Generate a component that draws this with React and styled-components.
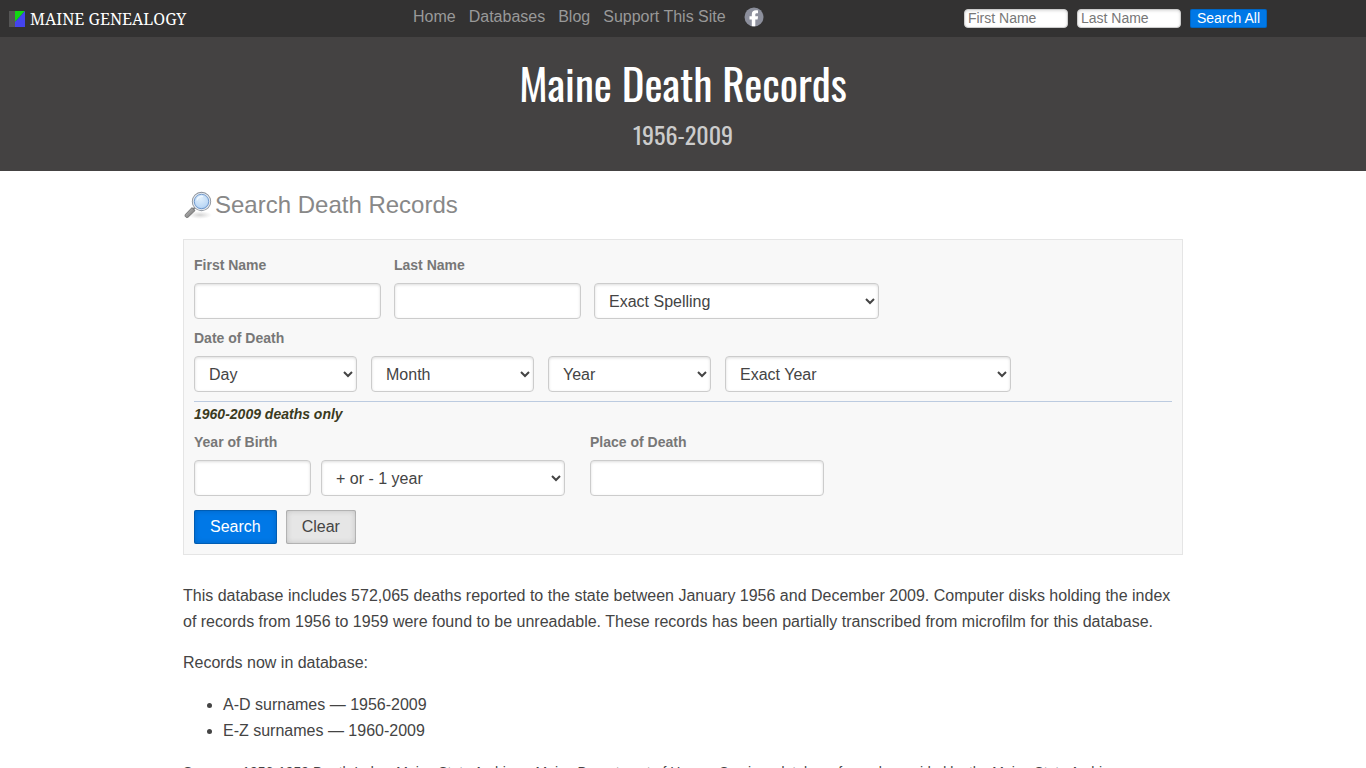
import React from "react";
import styled, { createGlobalStyle } from "styled-components";

const GlobalStyle = createGlobalStyle`
  *, *::before, *::after { box-sizing: border-box; }
  body {
    margin: 0;
    background: #fff;
    color: #444;
    font: 16px/26px "Liberation Sans", Arial, sans-serif;
  }
  button, input, select { font-family: inherit; }
`;

const TopBar = styled.header`
  display: grid;
  grid-template-columns: 30% 1fr auto;
  align-items: center;
  height: 37px;
  padding: 0 8px;
  background: #333232;
`;

const Brand = styled.a`
  display: flex;
  align-items: center;
  gap: 5px;
  color: #fff;
  font: 16px/24px "Droid Serif", "Noto Serif", "Liberation Serif", serif;
  text-decoration: none;
`;

const Nav = styled.nav`
  display: flex;
  align-items: center;
  align-self: start;
  gap: 13px;
  height: 34px;
`;

const NavLink = styled.a`
  color: #999;
  text-decoration: none;
`;

const SocialLink = styled.a`
  display: flex;
  margin-left: 5px;
`;

const QuickSearch = styled.form`
  display: flex;
  gap: 9px;
  margin-right: 91px;
`;

const QuickInput = styled.input`
  width: 104px;
  height: 19px;
  padding: 0 3px 2px;
  border: 1px solid #ccc;
  border-radius: 4px;
  background: #fff;
  box-shadow: inset 0 1px 3px #ddd;
  font-size: 14px;
  &::placeholder { color: #777; }
`;

const QuickButton = styled.button`
  height: 19px;
  padding: 0 7px;
  border: 0;
  border-radius: 2px;
  background: #0078e7;
  box-shadow: inset 0 0 0 1px rgba(0, 0, 0, 0.15);
  color: #fff;
  font-size: 14px;
  line-height: 19px;
`;

const Hero = styled.section`
  height: 134px;
  padding-top: 18px;
  background: #444242;
  font-family: Oswald, "Liberation Sans Narrow", "Liberation Sans", sans-serif;
  text-align: center;
`;

const Title = styled.h1`
  margin: 0;
  color: #fff;
  font-size: 43px;
  font-weight: 400;
  line-height: 56px;
`;

const Years = styled.p`
  margin: 0;
  color: #ccc;
  font-size: 24px;
  line-height: 46px;
`;

const Content = styled.main`
  max-width: 1000px;
  margin: 0 auto;
`;

const SectionTitle = styled.h2`
  display: flex;
  align-items: center;
  gap: 2px;
  margin: 0;
  padding: 19px 0;
  color: #888;
  font-size: 24px;
  font-weight: 400;
  line-height: 30px;
`;

const SearchForm = styled.form`
  padding: 12px 10px 10px;
  border: 1px solid #e5e5e5;
  background: #f8f8f8;
`;

const Fields = styled.div`
  display: flex;
  flex-wrap: wrap;
  align-items: flex-end;
  gap: ${(p) => p.$gap}px;
`;

const Field = styled.div`
  display: flex;
  flex-direction: column;
  flex: 0 1 ${(p) => p.$width}px;
  margin-left: ${(p) => (p.$spaced ? 15 : 0)}px;
`;

const labelText = `
  color: #777;
  font-size: 14px;
  font-weight: 700;
  line-height: 26px;
`;

const Label = styled.label`
  ${labelText}
  padding-bottom: 5px;
`;

const Group = styled.fieldset`
  margin: 0;
  padding: 6px 0 9px;
  border: 0;
  border-bottom: 1px solid #bccbe0;
`;

const Legend = styled.legend`
  ${labelText}
  float: left;
  width: 100%;
  padding: 0 0 5px;
  & + * { clear: both; }
`;

const control = `
  width: 100%;
  height: 36px;
  border: 1px solid #ccc;
  border-radius: 4px;
  background-color: #fff;
  box-shadow: inset 0 1px 3px #ddd;
  color: #444;
  font-size: 16px;
`;

const TextInput = styled.input`
  ${control}
  padding: 8px 10px;
`;

const Select = styled.select`
  ${control}
  padding: 0 1px 0 10px;
`;

const Note = styled.p`
  margin: 0;
  padding-bottom: 3px;
  color: #3a3a20;
  font-size: 14px;
  font-style: italic;
  font-weight: 700;
  line-height: 24px;
`;

const Actions = styled.div`
  display: flex;
  gap: 9px;
  padding-top: 14px;
`;

const Button = styled.button`
  height: 34px;
  padding: 0 16px;
  border: 0;
  border-radius: 2px;
  background: ${(p) => (p.$primary ? "#0078e7" : "#e6e6e6")};
  box-shadow: ${(p) =>
    p.$primary
      ? "inset 0 0 0 1px rgba(0,0,0,.15), inset 0 0 6px rgba(0,0,0,.2)"
      : "inset 0 0 0 1px rgba(0,0,0,.15), inset 0 0 6px rgba(0,0,0,.2)"};
  color: ${(p) => (p.$primary ? "#fff" : "#444")};
  font-size: 16px;
`;

const Description = styled.section`
  padding-top: 28px;
`;

const Paragraph = styled.p`
  margin: 0 0 15px;
`;

const List = styled.ul`
  margin: 16px 0;
  padding-left: 40px;
`;

const Source = styled.p`
  margin: 0;
  font-size: 14px;
  line-height: 24px;
`;

const FlagLogo = () => (
  <svg width="17" height="16" viewBox="0 0 17 16" aria-hidden="true">
    <path fill="#555" d="M1 0h7v16H1z" />
    <path fill="#12d812" d="M7 0h10L7 11z" />
    <path fill="#4444ef" d="M17 0v16H7v-5z" />
  </svg>
);

const FacebookLogo = () => (
  <svg width="20" height="20" viewBox="0 0 20 20" aria-hidden="true">
    <circle cx="10" cy="10" r="9.5" fill="#8c8f9c" />
    <path
      fill="#fff"
      d="M7.8 19.2v-6.6H5.5V9.2h2.3V7.6c0-3 1.6-4.3 4.2-4.3 1 0 2 .2 2 .2v2.8h-1.2c-1.2 0-1.5.6-1.5 1.4v1.5h2.8l-.5 3.4h-2.3v6.6z"
    />
  </svg>
);

const Magnifier = () => (
  <svg width="30" height="30" viewBox="0 0 30 30" aria-hidden="true">
    <defs>
      <radialGradient id="lens" cx=".45" cy=".35" r=".7">
        <stop offset="0" stopColor="#e0effc" />
        <stop offset=".65" stopColor="#bdd9f6" />
        <stop offset="1" stopColor="#8bb5e6" />
      </radialGradient>
      <radialGradient id="shade">
        <stop offset="0" stopColor="#bbb" stopOpacity=".65" />
        <stop offset="1" stopColor="#ccc" stopOpacity="0" />
      </radialGradient>
      <linearGradient id="handle" x1="0" y1="0" x2="1" y2="1">
        <stop offset="0" stopColor="#c8c8c8" />
        <stop offset="1" stopColor="#696969" />
      </linearGradient>
    </defs>
    <ellipse cx="17" cy="25" rx="12" ry="4" fill="url(#shade)" />
    <path d="m13 16.5-3 3" stroke="#888" strokeWidth="2" />
    <path d="m9 17.6 3 3-6.9 6.6c-1.8 1.2-4-1-2.6-2.9z" fill="url(#handle)" stroke="#626262" strokeWidth=".8" />
    <circle cx="18.5" cy="11.5" r="9" fill="url(#lens)" stroke="#8a9099" strokeWidth="1.4" />
    <circle cx="18.5" cy="11.5" r="8.2" fill="none" stroke="#e1e6ec" strokeWidth="1.3" />
    <circle cx="18.5" cy="11.5" r="7.2" fill="none" stroke="#608bc4" strokeWidth=".8" />
    <path d="M14 10.5c.5-3 3.2-4.6 6-3.8" fill="none" stroke="#eef7ff" strokeWidth="1.4" />
  </svg>
);

const LINKS = ["Home", "Databases", "Blog", "Support This Site"];

export default function App() {
  return (
    <>
      <GlobalStyle />
      <TopBar>
        <Brand href="#"><FlagLogo />MAINE GENEALOGY</Brand>
        <Nav>
          {LINKS.map((text) => <NavLink href="#" key={text}>{text}</NavLink>)}
          <SocialLink href="#" aria-label="Facebook"><FacebookLogo /></SocialLink>
        </Nav>
        <QuickSearch>
          <QuickInput aria-label="First Name" placeholder="First Name" />
          <QuickInput aria-label="Last Name" placeholder="Last Name" />
          <QuickButton type="button">Search All</QuickButton>
        </QuickSearch>
      </TopBar>
      <Hero>
        <Title>Maine Death Records</Title>
        <Years>1956-2009</Years>
      </Hero>
      <Content>
        <SectionTitle><Magnifier />Search Death Records</SectionTitle>
        <SearchForm>
          <Fields $gap={13}>
            <Field $width={187}>
              <Label htmlFor="first">First Name</Label>
              <TextInput id="first" />
            </Field>
            <Field $width={187}>
              <Label htmlFor="last">Last Name</Label>
              <TextInput id="last" />
            </Field>
            <Field $width={285}>
              <Select aria-label="Spelling"><option>Exact Spelling</option></Select>
            </Field>
          </Fields>
          <Group>
            <Legend>Date of Death</Legend>
            <Fields $gap={14}>
              <Field $width={163}>
                <Select aria-label="Day"><option>Day</option></Select>
              </Field>
              <Field $width={163}>
                <Select aria-label="Month"><option>Month</option></Select>
              </Field>
              <Field $width={163}>
                <Select aria-label="Year"><option>Year</option></Select>
              </Field>
              <Field $width={286}>
                <Select aria-label="Year range"><option>Exact Year</option></Select>
              </Field>
            </Fields>
          </Group>
          <Note>1960-2009 deaths only</Note>
          <Fields $gap={10}>
            <Field $width={117}>
              <Label htmlFor="birth">Year of Birth</Label>
              <TextInput id="birth" />
            </Field>
            <Field $width={244}>
              <Select aria-label="Birth year range"><option>+ or - 1 year</option></Select>
            </Field>
            <Field $width={234} $spaced>
              <Label htmlFor="place">Place of Death</Label>
              <TextInput id="place" />
            </Field>
          </Fields>
          <Actions>
            <Button type="button" $primary>Search</Button>
            <Button type="reset">Clear</Button>
          </Actions>
        </SearchForm>
        <Description>
          <Paragraph>
            This database includes 572,065 deaths reported to the state between January 1956 and
            December 2009. Computer disks holding the index of records from 1956 to 1959 were found
            to be unreadable. These records has been partially transcribed from microfilm for this
            database.
          </Paragraph>
          <Paragraph>Records now in database:</Paragraph>
          <List>
            <li>A-D surnames — 1956-2009</li>
            <li>E-Z surnames — 1960-2009</li>
          </List>
          <Source>
            Sources: 1956-1959 Death Index, Maine State Archives; Maine Department of Human Services
            database formerly provided by the Maine State Archives.
          </Source>
        </Description>
      </Content>
    </>
  );
}
